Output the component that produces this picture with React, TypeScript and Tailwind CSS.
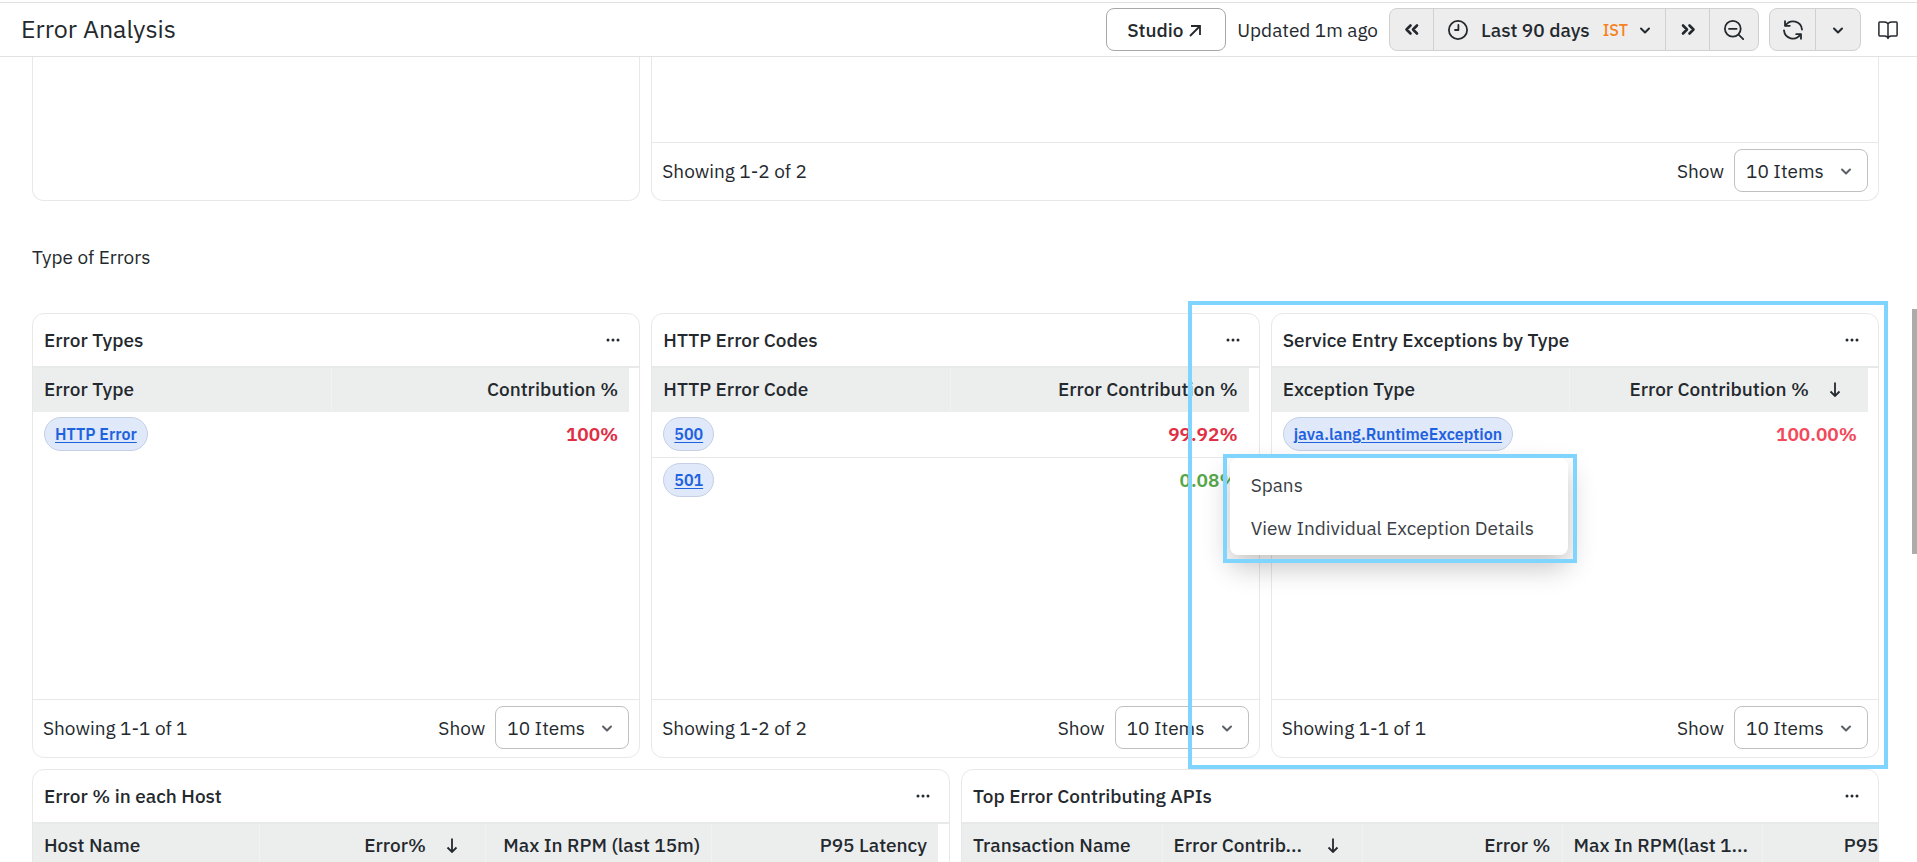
import type { ReactNode } from "react";
import { clsx } from "clsx";

type Column = { label: string; align?: "left" | "right"; sorted?: boolean };
type Row = { name: string; value: string; color: string };

const topCards: { title: string; columns: Column[]; rows: Row[]; showing: string }[] = [
  {
    title: "Error Types",
    columns: [{ label: "Error Type" }, { label: "Contribution %", align: "right" }],
    rows: [{ name: "HTTP Error", value: "100%", color: "text-[#e02f44]" }],
    showing: "Showing 1-1 of 1",
  },
  {
    title: "HTTP Error Codes",
    columns: [{ label: "HTTP Error Code" }, { label: "Error Contribution %", align: "right" }],
    rows: [
      { name: "500", value: "99.92%", color: "text-[#e02f44]" },
      { name: "501", value: "0.08%", color: "text-[#56a64b]" },
    ],
    showing: "Showing 1-2 of 2",
  },
  {
    title: "Service Entry Exceptions by Type",
    columns: [{ label: "Exception Type" }, { label: "Error Contribution %", align: "right", sorted: true }],
    rows: [{ name: "java.lang.RuntimeException", value: "100.00%", color: "text-[#f2495c]" }],
    showing: "Showing 1-1 of 1",
  },
];

const hostColumns: Column[] = [
  { label: "Host Name" },
  { label: "Error%", align: "right", sorted: true },
  { label: "Max In RPM (last 15m)", align: "right" },
  { label: "P95 Latency", align: "right" },
];

const apiColumns: Column[] = [
  { label: "Transaction Name" },
  { label: "Error Contrib...", sorted: true },
  { label: "Error %", align: "right" },
  { label: "Max In RPM(last 1...", align: "left" },
  { label: "P95 Latency", align: "right" },
];

function Icon({ size = 20, width = 2, children }: { size?: number; width?: number; children: ReactNode }) {
  return (
    <svg
      width={size}
      height={size}
      viewBox="0 0 20 20"
      fill="none"
      stroke="currentColor"
      strokeWidth={width}
      strokeLinecap="round"
      strokeLinejoin="round"
      aria-hidden="true"
      className="shrink-0"
    >
      {children}
    </svg>
  );
}

const ChevronDown = () => (
  <Icon size={20}>
    <path d="M6 8.500l4 4 4-4" />
  </Icon>
);

function Header() {
  return (
    <header className="mt-[2px] flex h-[55px] shrink-0 items-center border-y border-[#e2e2e2] pl-[21px] pr-[19px]">
      <h1 className="pb-[2px] text-[25px]">Error Analysis</h1>
      <div className="ml-auto flex items-center">
        <button className="flex h-[43px] w-[120px] items-center rounded-lg border border-[#a8a8a8] pl-5 font-medium">
          <span className="flex items-baseline gap-[6px]">
            Studio
            <svg width="12" height="12" viewBox="0 0 12 12" fill="none" stroke="currentColor" strokeWidth="1.8" aria-hidden="true">
              <path d="M1 11L10.500 1.500M2 1h9v9" />
            </svg>
          </span>
        </button>
        <span className="mx-[11px]">Updated 1m ago</span>

        <div className="flex h-[43px] divide-x divide-[#d0d0d0] overflow-hidden rounded-lg border border-[#d0d0d0] bg-[#ededed]">
          <button aria-label="Move time range backwards" className="flex w-11 items-center justify-center">
            <Icon width={2.6}>
              <path d="M8.500 5.500L4.500 9.500l4 4M15 5.500l-4 4 4 4" />
            </Icon>
          </button>
          <button className="flex w-[232px] items-center pl-[14px] pr-[10px]">
            <Icon width={1.8}>
              <circle cx="10" cy="10" r="9.1" />
              <path d="M10.400 5v5H7" />
            </Icon>
            <span className="ml-[13px] font-medium">Last 90 days</span>
            <span className="mr-auto pl-[13px] text-[16px] font-medium text-[#f5821f]">IST</span>
            <ChevronDown />
          </button>
          <button aria-label="Move time range forwards" className="flex w-11 items-center justify-center">
            <Icon width={2.6}>
              <path d="M5 5.500l4 4-4 4M11.500 5.500l4 4-4 4" />
            </Icon>
          </button>
          <button aria-label="Zoom out time range" className="flex w-12 items-center justify-center">
            <Icon width={1.8}>
              <circle cx="8.8" cy="8.8" r="7.9" />
              <path d="M14.600 14.600l4.600 4.600M5 8.800h7.600" />
            </Icon>
          </button>
        </div>

        <div className="ml-[10px] flex h-[43px] divide-x divide-[#d0d0d0] overflow-hidden rounded-lg border border-[#d0d0d0] bg-[#ededed]">
          <button aria-label="Refresh" className="flex w-[46px] items-center justify-center">
            <Icon width={1.8}>
              <path d="M2 1.200v4.600h4.800M18 18.800v-4.600h-4.800" />
              <path d="M2.600 5.400A9 9 0 0 1 19 9.600M17.400 14.600A9 9 0 0 1 1 10.400" />
            </Icon>
          </button>
          <button aria-label="Refresh interval" className="flex w-11 items-center justify-center">
            <ChevronDown />
          </button>
        </div>

        <button aria-label="Documentation" className="ml-[17px]">
          <Icon width={1.5}>
            <path d="M10 4v14.500M10 4C9.400 2.700 8 2 6.600 2H1.800Q.9 2 .9 2.900v12.200q0 .9.9.9h4.800c1.600 0 3 .8 3.400 2.300.4-1.500 1.800-2.300 3.400-2.300h4.800q.9 0 .9-.9V2.900q0-.9-.9-.9h-4.800C12 2 10.600 2.700 10 4z" />
          </Icon>
        </button>
      </div>
    </header>
  );
}

function CardFooter({ id, showing }: { id: string; showing: string }) {
  return (
    <div className="flex h-[58px] shrink-0 items-center border-t border-[#e8e8e8] px-[10px] pb-[2px]">
      <span>{showing}</span>
      <label htmlFor={id} className="ml-auto mr-[10px]">
        Show
      </label>
      <div className="relative">
        <select id={id} className="h-[43px] w-[134px] appearance-none rounded-lg border border-[#c0c0c0] bg-white pl-[11px]">
          <option>10 Items</option>
          <option>20 Items</option>
        </select>
        <span className="pointer-events-none absolute right-3 top-3 text-[#5b5f66]">
          <ChevronDown />
        </span>
      </div>
    </div>
  );
}

function CardTitle({ title }: { title: string }) {
  return (
    <div className="flex h-[54px] shrink-0 items-center border-b-2 border-[#e8e9e9] pl-[11px] pr-[14px]">
      <h3 className="font-medium">{title}</h3>
      <button aria-label={`${title} menu`} className="ml-auto flex h-6 w-6 items-center justify-center">
        <svg width="14" height="4" viewBox="0 0 14 4" fill="currentColor" aria-hidden="true">
          <circle cx="2" cy="2" r="1.5" />
          <circle cx="7" cy="2" r="1.5" />
          <circle cx="12" cy="2" r="1.5" />
        </svg>
      </button>
    </div>
  );
}

function TableHead({ columns }: { columns: Column[] }) {
  return (
    <thead>
      <tr className="h-[43px] border-b border-[#eceeee] bg-[#eceeee]">
        {columns.map((col) => (
          <th key={col.label} className="border-r border-[#f1f3f3] px-[11px] font-medium last:border-r-0">
            <div className={clsx("flex items-center whitespace-nowrap", col.align === "right" && "justify-end")}>
              {col.label}
              {col.sorted && (
                <span className={clsx("flex w-5 justify-center", col.align === "right" ? "ml-4 mr-3" : "ml-auto mr-2")}>
                  <svg width="12" height="15" viewBox="0 0 12 15" fill="none" stroke="currentColor" strokeWidth="1.8" aria-hidden="true">
                    <path d="M6 .5V13.500M1.500 9.500L6 14l4.500-4.500" />
                  </svg>
                </span>
              )}
            </div>
          </th>
        ))}
      </tr>
    </thead>
  );
}

function ExceptionMenu() {
  return (
    <>
      <div className="pointer-events-none absolute -bottom-3 -left-[84px] -right-[10px] -top-[13px] border-4 border-[#7fd5ff]" />
      <div className="absolute -left-[42px] top-36 z-10 w-[338px] rounded-lg bg-white pb-[6px] pt-[5px] text-[#3a3e44] shadow-[0_12px_28px_rgba(0,0,0,0.24)]">
        <div className="pointer-events-none absolute -bottom-2 -left-[7px] -right-[9px] -top-1 border-4 border-[#7fd5ff]" />
        <button className="block h-[43px] w-full px-[21px] text-left">Spans</button>
        <button className="block h-[43px] w-full px-[21px] text-left">View Individual Exception Details</button>
      </div>
    </>
  );
}

export default function App() {
  return (
    <div className="relative flex h-screen flex-col overflow-hidden bg-white font-['IBM_Plex_Sans',Inter,sans-serif] text-[19px] leading-6 text-[#24292e]">
      <Header />

      <main className="min-h-0 flex-1 overflow-hidden pl-8 pr-[38px]">
        <div className="grid grid-cols-3 gap-[11px]">
          <div className="h-36 rounded-b-xl border border-t-0 border-[#e8e8e8]" />
          <div className="col-span-2 flex h-36 flex-col justify-end rounded-b-xl border border-t-0 border-[#e8e8e8]">
            <CardFooter id="summary-size" showing="Showing 1-2 of 2" />
          </div>
        </div>

        <h2 className="flex h-28 items-center">Type of Errors</h2>

        <div className="grid grid-cols-3 gap-[11px]">
          {topCards.map((card, i) => (
            <section key={card.title} className="relative flex min-h-[445px] flex-col rounded-xl border border-[#e8e8e8]">
              <CardTitle title={card.title} />
              <div className="flex-1 pr-[10px]">
                <table className="w-full table-fixed border-collapse">
                  <TableHead columns={card.columns} />
                  <tbody className="divide-y divide-[#e8e8e8]">
                    {card.rows.map((row) => (
                      <tr key={row.name} className="h-[46px]">
                        <td className="px-[11px]">
                          <a
                            href="#"
                            className="inline-flex h-[34px] items-center rounded-full border border-[#c5d0e6] bg-[#e0e9fa] px-[10px] text-[16px] font-semibold text-[#1f62e0] underline underline-offset-2"
                          >
                            {row.name}
                          </a>
                        </td>
                        <td className={clsx("px-[11px] text-right font-semibold", row.color)}>{row.value}</td>
                      </tr>
                    ))}
                  </tbody>
                </table>
              </div>
              <CardFooter id={`page-size-${i}`} showing={card.showing} />
              {i === 2 && <ExceptionMenu />}
            </section>
          ))}
        </div>

        <div className="mt-[11px] grid grid-cols-2 gap-[11px]">
          <section className="min-h-[445px] min-w-0 rounded-xl border border-[#e8e8e8]">
            <CardTitle title="Error % in each Host" />
            <div className="pr-[11px]">
              <table className="w-full table-fixed border-collapse">
                <TableHead columns={hostColumns} />
              </table>
            </div>
          </section>
          <section className="min-h-[445px] min-w-0 rounded-xl border border-[#e8e8e8]">
            <CardTitle title="Top Error Contributing APIs" />
            <div className="overflow-hidden">
              <table className="w-[1000px] table-fixed border-collapse">
                <TableHead columns={apiColumns} />
              </table>
            </div>
          </section>
        </div>
      </main>

      {/* scrollbar thumb */}
      <div className="absolute right-0 top-[309px] h-[245px] w-[5px] bg-[#acacac]" />
    </div>
  );
}
